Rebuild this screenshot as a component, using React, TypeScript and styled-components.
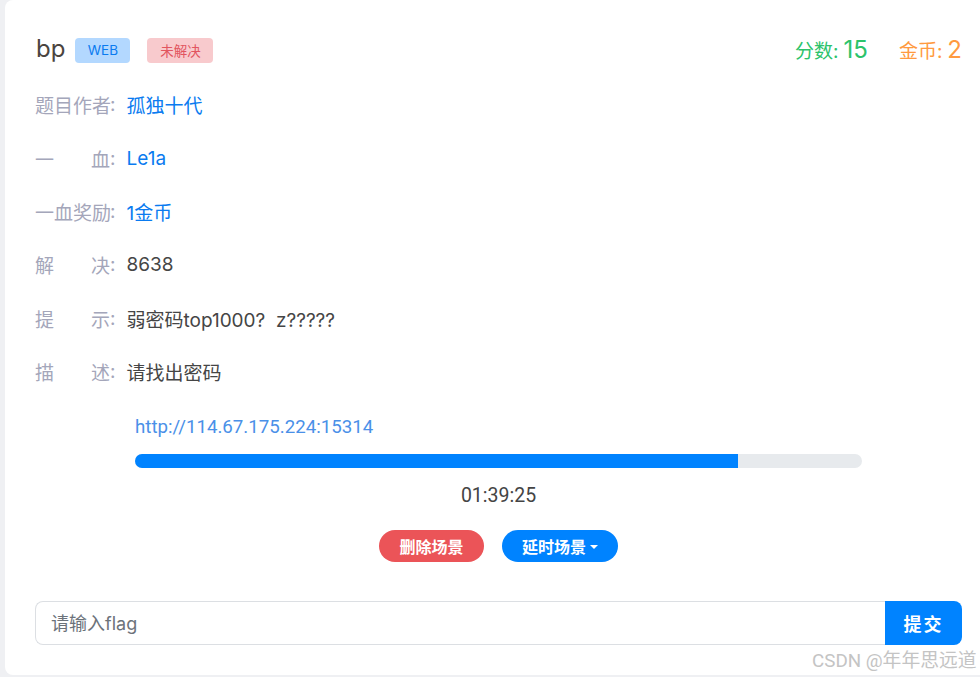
import React from "react";
import styled, { createGlobalStyle } from "styled-components";

const Global = createGlobalStyle`
  html, body { margin: 0; padding: 0; }
  body {
    background: #eff0f3;
    overflow: hidden;
    font-family: Inter, "Noto Sans CJK SC", sans-serif;
  }
`;

const Page = styled.div`
  width: 980px;
  height: 677px;
  padding-left: 5px;
  box-sizing: border-box;
  overflow: hidden;
`;

const Card = styled.div`
  width: 1000px;
  height: 675px;
  background: #fff;
  border-radius: 8px;
  box-sizing: border-box;
  padding: 33px 30px 0 30px;
  position: relative;
`;

const Content = styled.div`
  width: 927px;
  display: flex;
  flex-direction: column;
`;

const Header = styled.div`
  display: flex;
  align-items: center;
  height: 32px;
`;

const Title = styled.span`
  font-size: 24px;
  color: #4a4440;
  margin-left: 1px;
  margin-right: 10px;
  line-height: 32px;
`;

const Tag = styled.span<{ $bg: string; $fg: string; $ml?: number; $w: number }>`
  display: inline-flex;
  align-items: center;
  justify-content: center;
  width: ${(p) => p.$w}px;
  height: 25px;
  border-radius: 4px;
  font-size: 13.5px;
  background: ${(p) => p.$bg};
  color: ${(p) => p.$fg};
  margin-left: ${(p) => p.$ml ?? 0}px;
  margin-top: 2px;
`;

const Stats = styled.div`
  margin-left: auto;
  display: flex;
  align-items: baseline;
  gap: 31px;
`;

const Stat = styled.span<{ $color: string }>`
  color: ${(p) => p.$color};
  font-size: 19px;
  display: inline-flex;
  align-items: baseline;
  gap: 5px;
`;

const StatNum = styled.span`
  font-size: 24px;
`;

const Rows = styled.div`
  display: flex;
  flex-direction: column;
  margin-top: 13px;
`;

const Row = styled.div`
  display: flex;
  align-items: center;
  height: 53.4px;
  font-size: 19px;
`;

const Label = styled.span`
  display: flex;
  align-items: center;
  color: #a4a6ba;
  margin-right: 11px;
  white-space: nowrap;
`;

const LabelText = styled.span`
  width: 75px;
  text-align: justify;
  text-align-last: justify;
`;

const Value = styled.span<{ $link?: boolean }>`
  color: ${(p) => (p.$link ? "#0a7bf0" : "#454545")};
  white-space: pre;
`;

const Scene = styled.div`
  margin: 0 100px;
  display: flex;
  flex-direction: column;
`;

const Url = styled.span`
  font-family: Roboto, "Noto Sans CJK SC", sans-serif;
  font-size: 18.7px;
  color: #4a90e8;
  height: 55px;
  padding-top: 2px;
  box-sizing: border-box;
  display: flex;
  align-items: center;
`;

const Track = styled.div`
  height: 14px;
  border-radius: 7px;
  background: #e7eaed;
  overflow: hidden;
  margin-top: 1px;
`;

const Fill = styled.div`
  height: 100%;
  background: #0083ff;
`;

const Time = styled.div`
  text-align: center;
  font-family: Roboto, "Noto Sans CJK SC", sans-serif;
  font-size: 19.5px;
  color: #444;
  margin-top: 16px;
`;

const Actions = styled.div`
  display: flex;
  justify-content: center;
  gap: 18px;
  margin-top: 23px;
`;

const Pill = styled.button<{ $bg: string; $w: number }>`
  width: ${(p) => p.$w}px;
  height: 32px;
  border: none;
  border-radius: 16px;
  background: ${(p) => p.$bg};
  color: #fff;
  font-family: "Noto Sans CJK SC", sans-serif;
  font-weight: 700;
  font-size: 16px;
  display: inline-flex;
  align-items: center;
  justify-content: center;
  gap: 4px;
  padding: 0;
`;

const Caret = styled.span`
  width: 0;
  height: 0;
  border-left: 4px solid transparent;
  border-right: 4px solid transparent;
  border-top: 4px solid #fff;
  margin-top: 2px;
`;

const FlagForm = styled.div`
  display: flex;
  height: 44px;
  margin-top: 39px;
`;

const FlagInput = styled.input`
  flex: 1;
  height: 44px;
  box-sizing: border-box;
  border: 1px solid #dcdfe3;
  border-right: none;
  border-radius: 8px 0 0 8px;
  padding: 0 15px;
  font-size: 18px;
  font-family: Inter, "Noto Sans CJK SC", sans-serif;
  color: #444;
  outline: none;
  &::placeholder { color: #6c727a; }
`;

const Submit = styled.button`
  width: 77px;
  height: 44px;
  border: none;
  border-radius: 0 8px 8px 0;
  background: #0083ff;
  color: #fff;
  font-family: "Noto Sans CJK SC", sans-serif;
  font-weight: 700;
  font-size: 18px;
  letter-spacing: 2px;
  padding: 0;
`;

const Watermark = styled.div`
  position: absolute;
  left: 807px;
  top: 645px;
  font-family: Roboto, "Noto Sans CJK SC", sans-serif;
  font-size: 18.8px;
  color: #c4c4c4;
  white-space: nowrap;
`;

const rows: { label: string; value: string; link?: boolean }[] = [
  { label: "题目作者", value: "孤独十代", link: true },
  { label: "一血", value: "Le1a", link: true },
  { label: "一血奖励", value: "1金币", link: true },
  { label: "解决", value: "8638" },
  { label: "提示", value: "弱密码top1000?  z?????" },
  { label: "描述", value: "请找出密码" },
];

export default function App() {
  const progress = 0.83;
  return (
    <>
      <Global />
      <Page>
        <Card>
          <Content>
            <Header>
              <Title>bp</Title>
              <Tag $bg="#b3d8ff" $fg="#0a7bf0" $w={55}>WEB</Tag>
              <Tag $bg="#f8cacd" $fg="#e2555f" $ml={17} $w={66}>未解决</Tag>
              <Stats>
                <Stat $color="#2cc36b">
                  分数:<StatNum>15</StatNum>
                </Stat>
                <Stat $color="#ff9a40">
                  金币:<StatNum>2</StatNum>
                </Stat>
              </Stats>
            </Header>
            <Rows>
              {rows.map((r) => (
                <Row key={r.label}>
                  <Label>
                    <LabelText>{r.label}</LabelText>:
                  </Label>
                  <Value $link={r.link}>{r.value}</Value>
                </Row>
              ))}
            </Rows>
            <Scene>
              <Url>http://114.67.175.224:15314</Url>
              <Track>
                <Fill style={{ width: `${progress * 100}%` }} />
              </Track>
              <Time>01:39:25</Time>
            </Scene>
            <Actions>
              <Pill $bg="#eb5458" $w={105}>删除场景</Pill>
              <Pill $bg="#0083ff" $w={116}>
                延时场景<Caret />
              </Pill>
            </Actions>
            <FlagForm>
              <FlagInput placeholder="请输入flag" />
              <Submit>提交</Submit>
            </FlagForm>
          </Content>
          <Watermark>CSDN @年年思远道</Watermark>
        </Card>
      </Page>
    </>
  );
}
